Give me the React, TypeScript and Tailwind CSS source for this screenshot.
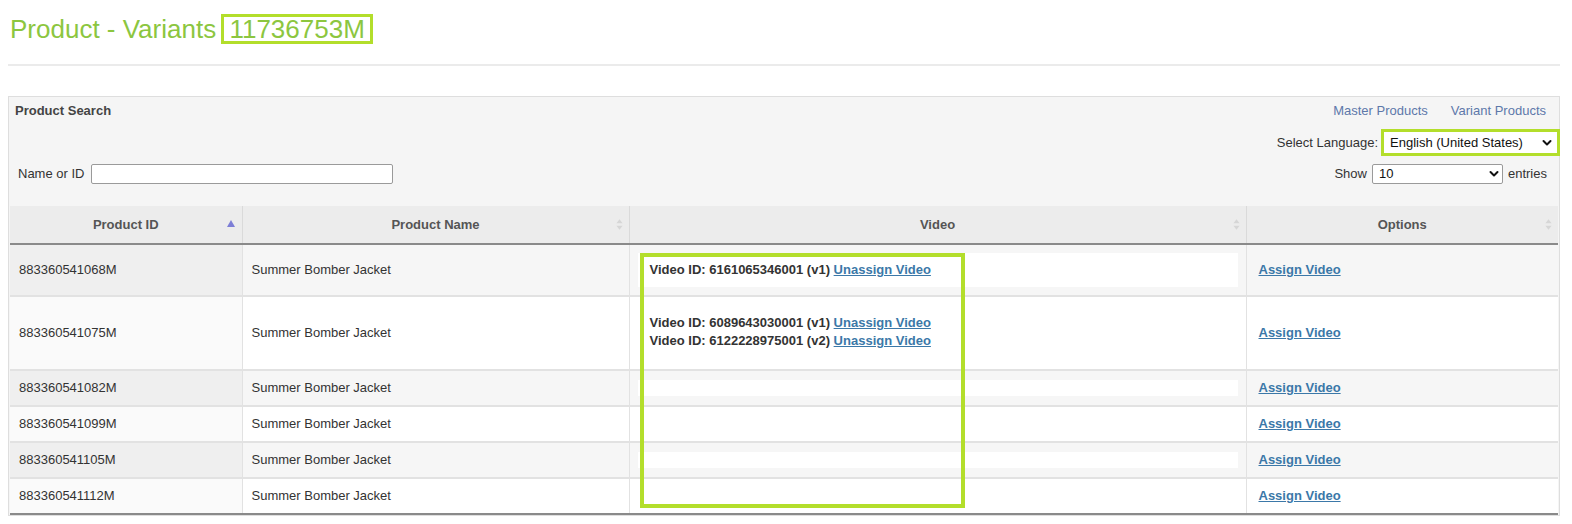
import React from 'react'

const rows = [
  { id: '883360541068M', videos: [{ vid: '6161065346001', v: 'v1' }] },
  {
    id: '883360541075M',
    videos: [
      { vid: '6089643030001', v: 'v1' },
      { vid: '6122228975001', v: 'v2' },
    ],
  },
  { id: '883360541082M', videos: [] },
  { id: '883360541099M', videos: [] },
  { id: '883360541105M', videos: [] },
  { id: '883360541112M', videos: [] },
]

function Chevron({ className = '' }: { className?: string }) {
  return (
    <svg viewBox="0 0 10 10" className={className} aria-hidden>
      <polyline points="1.5,3 5,6.5 8.5,3" fill="none" stroke="#111" strokeWidth="2" strokeLinecap="round" strokeLinejoin="round" />
    </svg>
  )
}

function SortBoth() {
  return (
    <svg viewBox="0 0 8 14" className="w-[7px] h-[13px]" aria-hidden>
      <polygon points="4,1 7.5,5.5 0.5,5.5" fill="#d6d6d6" />
      <polygon points="4,13 7.5,8.5 0.5,8.5" fill="#d6d6d6" />
    </svg>
  )
}

function SortAsc() {
  return (
    <svg viewBox="0 0 8 7" className="w-[8px] h-[7px]" aria-hidden>
      <polygon points="4,0 8,7 0,7" fill="#7d7ed6" />
    </svg>
  )
}

export default function App() {
  return (
    <div className="min-h-screen bg-white font-['Liberation_Sans',Arial,sans-serif] text-[13px] text-[#333] pl-2 pr-3 pt-[14px]">
      {/* Page title */}
      <h1 className="pl-[2px] text-[26px] leading-[24px] text-[#8cc63f] font-normal flex items-center">
        <span>Product - Variants&nbsp;</span>
        <span className="border-[3px] border-[#b3de2b] px-[5px] -ml-[2px]">11736753M</span>
      </h1>

      <div className="mt-5 h-[2px] bg-[#ebebeb]" />

      {/* Search panel + table */}
      <div className="mt-[30px] border border-[#dedede] bg-[#f5f5f5] pl-px pr-px">
        <div className="flex items-center justify-between h-[27px]">
          <span className="pl-[5px] font-bold text-[#444]">Product Search</span>
          <div className="flex gap-[23px] pr-[12px] text-[#5d78aa]">
            <a href="#">Master Products</a>
            <a href="#">Variant Products</a>
          </div>
        </div>

        <div className="mt-[5px] flex items-center justify-end gap-[3px]">
          <span>Select Language:</span>
          <div className="border-[3px] border-[#b3de2b] bg-white h-[27px] w-[179px] flex items-center justify-between pl-[6px] pr-[5px] -mr-[2px]">
            <span className="text-[#111]">English (United States)</span>
            <Chevron className="w-[10px] h-[10px]" />
          </div>
        </div>

        <div className="mt-[8px] flex items-center justify-between">
          <label className="flex items-center gap-[7px] pl-[8px]">
            <span>Name or ID</span>
            <input type="text" className="w-[302px] h-[20px] bg-white border border-[#9a9a9a] rounded-[2px] outline-none" />
          </label>
          <div className="flex items-center gap-[5px] pr-[11px]">
            <span>Show</span>
            <div className="w-[131px] h-[20px] bg-white border border-[#9a9a9a] rounded-[2px] flex items-center justify-between pl-[6px] pr-[3px]">
              <span className="text-[#111]">10</span>
              <Chevron className="w-[10px] h-[10px]" />
            </div>
            <span>entries</span>
          </div>
        </div>

        <div className="relative mt-[22px]">
          <table className="w-full table-fixed border-collapse">
            <colgroup>
              <col className="w-[232px]" />
              <col className="w-[387px]" />
              <col className="w-[617px]" />
              <col />
            </colgroup>
            <thead>
              <tr className="bg-[#ececec] h-[38px] border-b-2 border-[#8a8a8a]">
                <th className="relative font-bold text-[#555] border-r border-[#dadada]">
                  Product ID
                  <span className="absolute right-[7px] top-[14px]"><SortAsc /></span>
                </th>
                <th className="relative font-bold text-[#555] border-r border-[#dadada]">
                  Product Name
                  <span className="absolute right-[6px] top-[12px]"><SortBoth /></span>
                </th>
                <th className="relative font-bold text-[#555] border-r border-[#dadada]">
                  Video
                  <span className="absolute right-[6px] top-[12px]"><SortBoth /></span>
                </th>
                <th className="relative font-bold text-[#555]">
                  Options
                  <span className="absolute right-[6px] top-[12px]"><SortBoth /></span>
                </th>
              </tr>
            </thead>
            <tbody>
              {rows.map((r, i) => {
                const odd = i % 2 === 0
                const last = i === rows.length - 1
                return (
                  <tr
                    key={r.id}
                    className={`${odd ? 'bg-[#f6f6f6]' : 'bg-white'} ${last ? 'border-b-2 border-[#8a8a8a]' : 'border-b-2 border-[#e2e2e2]'}`}
                  >
                    <td className={`px-[9px] py-[9px] leading-4 border-r border-[#e2e2e2] ${odd ? 'bg-[#efefef]' : 'bg-[#fafafa]'}`}>{r.id}</td>
                    <td className="px-[9px] py-[9px] leading-4 border-r border-[#e2e2e2]">Summer Bomber Jacket</td>
                    <td className="px-2 py-2 border-r border-[#e2e2e2]">
                      <div className={`bg-white px-3 leading-[18px] font-bold min-h-4 ${r.videos.length > 1 ? 'pt-[9px] pb-[11px]' : 'py-2'}`}>
                        {r.videos.map((v) => (
                          <div key={v.vid}>
                            Video ID: {v.vid} ({v.v}){' '}
                            <a href="#" className="underline text-[#3b78a8]">Unassign Video</a>
                          </div>
                        ))}
                      </div>
                    </td>
                    <td className="px-3 py-[9px] leading-4">
                      <a href="#" className="font-bold underline text-[#3b78a8]">Assign Video</a>
                    </td>
                  </tr>
                )
              })}
            </tbody>
          </table>

          {/* highlight annotation over the video column */}
          <div className="absolute left-[630px] top-[47px] w-[325px] h-[255px] border-4 border-[#b3de2b] pointer-events-none" />
        </div>
      </div>
    </div>
  )
}
